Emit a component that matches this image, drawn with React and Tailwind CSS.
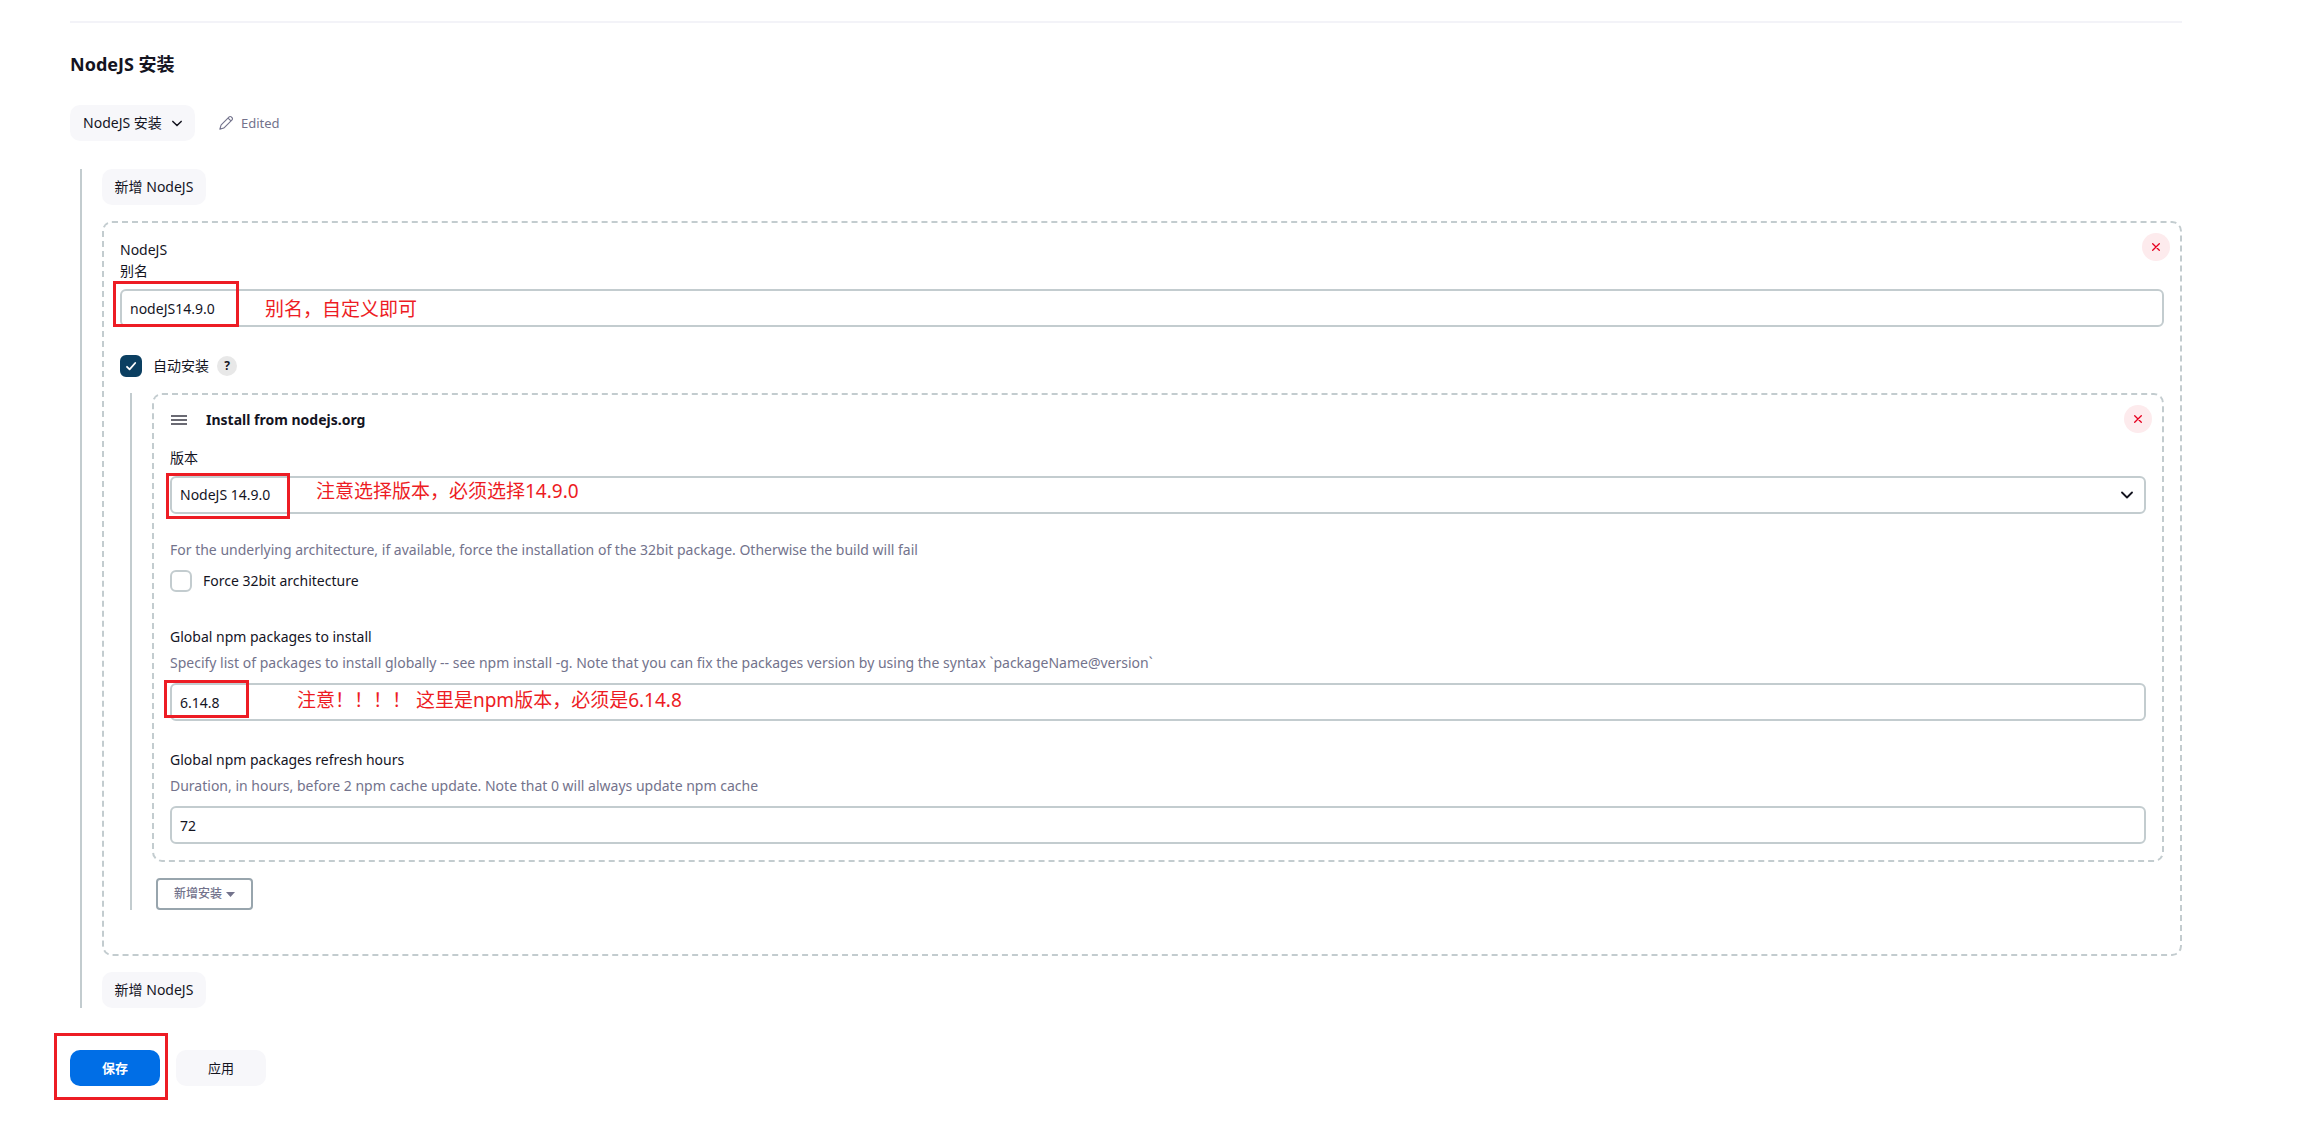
import { useState } from "react";

const inputClass =
  "block w-full h-[38px] rounded-md border-2 border-[#c3cccf] bg-white px-2 text-sm text-[#14141f] outline-none";

function Callout({ className }) {
  return <div className={`pointer-events-none absolute border-3 border-[#ed1c24] ${className}`} />;
}

function Note({ className, children }) {
  return (
    <span className={`pointer-events-none absolute whitespace-pre text-[19px] leading-7 text-[#ed1c24] ${className}`}>
      {children}
    </span>
  );
}

function SoftButton({ className = "", children }) {
  return (
    <button type="button" className={`flex h-9 items-center justify-center rounded-[10px] bg-[#f7f7fa] text-[#14141f] ${className}`}>
      {children}
    </button>
  );
}

function DeleteButton() {
  return (
    <button
      type="button"
      aria-label="Delete"
      className="absolute right-[10px] top-[10px] flex size-7 items-center justify-center rounded-full bg-[#fdebed] text-[#e6001f]"
    >
      <svg viewBox="0 0 8 8" className="size-2" fill="none" stroke="currentColor" strokeWidth="1.3" strokeLinecap="round">
        <path d="M.7.7l6.6 6.6M7.3.7L.7 7.3" />
      </svg>
    </button>
  );
}

function Chevron({ className }) {
  return (
    <svg viewBox="0 0 12 8" className={className} fill="none" stroke="currentColor" strokeWidth="1.8" strokeLinecap="round" strokeLinejoin="round">
      <path d="M1 1.5l5 5 5-5" />
    </svg>
  );
}

function Checkbox({ id, checked, onChange, label }) {
  return (
    <div className="flex h-[22px] items-center">
      <span className="relative size-[22px]">
        <input
          id={id}
          type="checkbox"
          checked={checked}
          onChange={(e) => onChange(e.target.checked)}
          className="peer block size-[22px] appearance-none rounded-md border-2 border-[#c3cccf] bg-white checked:border-[#0b3f61] checked:bg-[#0b3f61]"
        />
        <svg
          viewBox="0 0 22 22"
          className="pointer-events-none absolute inset-0 hidden size-[22px] peer-checked:block"
          fill="none"
          stroke="white"
          strokeWidth="1.8"
          strokeLinecap="round"
          strokeLinejoin="round"
        >
          <path d="M7 11.8l2.6 2.6L15.2 8" />
        </svg>
      </span>
      <label htmlFor={id} className="pl-[11px] text-sm">
        {label}
      </label>
    </div>
  );
}

export default function App() {
  const [autoInstall, setAutoInstall] = useState(true);
  const [force32, setForce32] = useState(false);

  return (
    <form
      className="bg-white pt-[21px] pr-32 pb-9 pl-[70px] font-['Noto_Sans','Noto_Sans_CJK_SC',sans-serif] text-sm leading-[21px] text-[#14141f]"
      onSubmit={(e) => e.preventDefault()}
    >
      <hr className="border-t-2 border-[#f3f3f8]" />
      <h2 className="mt-[29px] text-lg leading-6 font-bold">NodeJS 安装</h2>

      <div className="mt-[29px] flex items-center">
        <SoftButton className="w-[125px] gap-[10px] text-sm">
          NodeJS 安装
          <Chevron className="h-[7px] w-[10px]" />
        </SoftButton>
        <span className="ml-[23px] flex items-center gap-[7px] text-[13px] text-[#73738c]">
          <svg viewBox="0 0 512 512" className="size-4" fill="none" stroke="currentColor" strokeWidth="36" strokeLinecap="round" strokeLinejoin="round">
            <path d="M358 62L118 302c-14 14-24 32-30 52L60 452l98-28c20-6 38-16 52-30l240-240a46 46 0 0 0 0-66l-26-26a46 46 0 0 0-66 0zM322 98l92 92" />
          </svg>
          Edited
        </span>
      </div>

      <div className="mt-7 ml-[10px] border-l-2 border-[#c3cccf] pl-5">
        <SoftButton className="w-[104px] text-sm">新增 NodeJS</SoftButton>

        <div className="relative mt-4 rounded-[10px] border-2 border-dashed border-[#c3cccf] p-4">
          <DeleteButton />
          <div>NodeJS</div>
          <label htmlFor="alias" className="block">别名</label>
          <div className="relative mt-2">
            <input id="alias" type="text" defaultValue="nodeJS14.9.0" className={inputClass} />
            <Callout className="-top-2 -left-[7px] h-[46px] w-[126px]" />
            <Note className="top-[6px] left-[145px]">别名，自定义即可</Note>
          </div>

          <div className="mt-7 flex items-center">
            <Checkbox id="auto" checked={autoInstall} onChange={setAutoInstall} label="自动安装" />
            <button type="button" aria-label="Help" className="ml-2 flex size-5 items-center justify-center rounded-full bg-[#e8e8e8] text-xs font-bold">
              ?
            </button>
          </div>

          <div className="mt-4 mb-7 ml-[10px] border-l-2 border-[#c3cccf] pl-5">
            <div className="relative rounded-[10px] border-2 border-dashed border-[#c3cccf] p-4">
              <DeleteButton />
              <div className="flex items-center leading-[18px] font-bold">
                <svg viewBox="0 0 16 10" className="mr-[19px] ml-px h-[10px] w-4" stroke="#3a3a46" strokeWidth="1.6">
                  <path d="M0 1h16M0 5h16M0 9h16" />
                </svg>
                Install from nodejs.org
              </div>

              <label htmlFor="version" className="mt-[18px] block">版本</label>
              <div className="relative mt-2">
                <select id="version" defaultValue="14.9.0" className={`${inputClass} appearance-none`}>
                  <option value="14.9.0">NodeJS 14.9.0</option>
                </select>
                <Chevron className="pointer-events-none absolute top-[15px] right-[13px] h-2 w-3" />
                <Callout className="-top-[3px] -left-1 h-[46px] w-[124px]" />
                <Note className="top-px left-[146px]">注意选择版本，必须选择14.9.0</Note>
              </div>

              <p className="mt-[25px] mb-[10px] text-[#73738c]">
                For the underlying architecture, if available, force the installation of the 32bit package. Otherwise the build will fail
              </p>
              <Checkbox id="force32" checked={force32} onChange={setForce32} label="Force 32bit architecture" />

              <label htmlFor="packages" className="mt-[34px] block">Global npm packages to install</label>
              <p className="mt-[5px] text-[#73738c]">
                Specify list of packages to install globally -- see npm install -g. Note that you can fix the packages version by using the syntax `packageName@version`
              </p>
              <div className="relative mt-[10px]">
                <input id="packages" type="text" defaultValue="6.14.8" className={inputClass} />
                <Callout className="-top-[3px] -left-[6px] h-[38px] w-[85px]" />
                <Note className="top-[3px] left-[127px]">注意！！！！ 这里是npm版本，必须是6.14.8</Note>
              </div>

              <label htmlFor="refresh" className="mt-7 block">Global npm packages refresh hours</label>
              <p className="mt-[5px] text-[#73738c]">
                Duration, in hours, before 2 npm cache update. Note that 0 will always update npm cache
              </p>
              <input id="refresh" type="text" defaultValue="72" className={`${inputClass} mt-[10px]`} />
            </div>

            <button
              type="button"
              className="mt-4 ml-1 flex h-8 w-[97px] items-center justify-center gap-1 rounded border-2 border-[#98a5ad] text-xs font-medium text-[#73738c]"
            >
              新增安装
              <svg viewBox="0 0 9 5" className="h-[5px] w-[9px]" fill="currentColor">
                <path d="M0 0h9L4.5 5z" />
              </svg>
            </button>
          </div>
        </div>

        <SoftButton className="mt-4 w-[104px] text-sm">新增 NodeJS</SoftButton>
      </div>

      <div className="mt-[42px] flex gap-4">
        <div className="relative">
          <button type="submit" className="h-9 w-[90px] rounded-[10px] bg-[#006ee6] text-[13px] font-bold text-white">
            保存
          </button>
          <Callout className="-top-[17px] -left-4 h-[67px] w-[114px]" />
        </div>
        <SoftButton className="w-[90px] text-[13px]">应用</SoftButton>
      </div>
    </form>
  );
}
